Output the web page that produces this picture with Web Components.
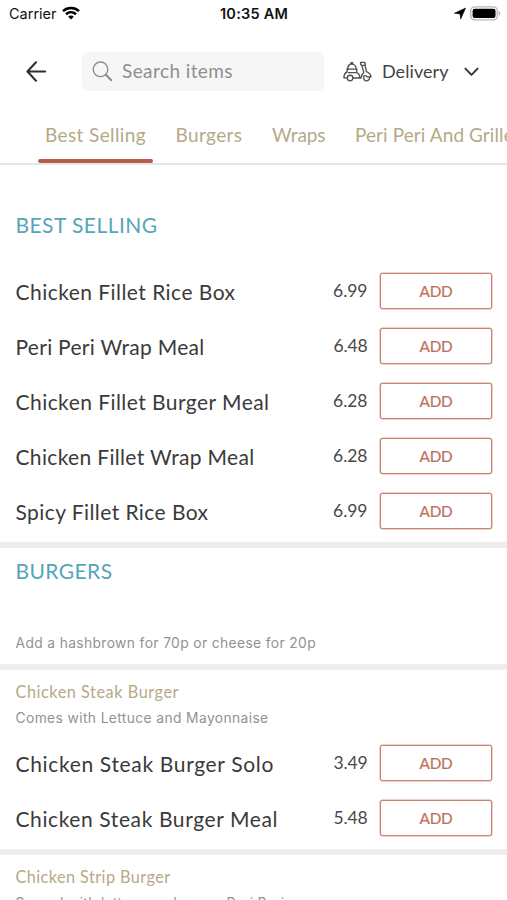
<!DOCTYPE html>
<html lang="en">
<head>
<meta charset="utf-8">
<title>Menu</title>
<style>
html, body { margin: 0; height: 100%; overflow: hidden; background: #fff; }
body { font-family: Lato, "Open Sans", sans-serif; color: #3b3b3b; }
</style>
</head>
<body>
<menu-app></menu-app>
<script>
const define = (name, html, Base = HTMLElement) => {
  const t = document.createElement('template');
  t.innerHTML = html;
  customElements.define(name, class extends Base {
    constructor() {
      super();
      this.attachShadow({ mode: 'open' }).append(t.content.cloneNode(true));
    }
  });
};

// One line of text whose tracking is set so that it spans the "w" attribute in pixels.
class TrackedText extends HTMLElement {
  constructor() {
    super();
    this.attachShadow({ mode: 'open' }).innerHTML =
      '<style>:host{display:inline-block;white-space:pre}span{display:inline-block}</style><span><slot></slot></span>';
  }
  connectedCallback() {
    const want = parseFloat(this.getAttribute('w'));
    const span = this.shadowRoot.querySelector('span');
    const n = this.textContent.length;
    if (!want || !n) return;
    span.style.letterSpacing = '0';
    const d = (want - span.getBoundingClientRect().width) / n;
    span.style.letterSpacing = d.toFixed(3) + 'px';
  }
}

define('status-bar', `
<style>
:host { display: grid; grid-template-columns: 1fr auto 1fr; align-items: center; height: 28px; padding: 0 6px 0 9px; box-sizing: border-box; font: 400 14.5px/28px Inter, sans-serif; color: #111; }
.l, .r { display: flex; align-items: center; }
.l { gap: 5px; } .r { justify-content: flex-end; gap: 4px; }
.l svg { margin-top: -2px; } .r svg { margin-top: -2px; }
.t { font-weight: 600; margin-left: -2px; }
svg { display: block; }
</style>
<div class="l"><tracked-text w="47.5">Carrier</tracked-text>
<svg width="18" height="14" viewBox="0 0 18 14" fill="none" stroke="#000" stroke-width="2.5"><path d="M1 5.1C5.5.9 12.5.9 17 5.1"/><path d="M4 8.3c3-2.7 7-2.7 10 0"/><path d="M9 13.6 6.2 10.7c1.6-1.5 4-1.5 5.6 0z" fill="#000" stroke="none"/></svg></div>
<tracked-text class="t" w="68">10:35 AM</tracked-text>
<div class="r">
<svg width="12" height="13" viewBox="0 0 12 13"><path d="M11.6 1 6.7 12.2 6 6.9.3 6.3z" fill="#000" stroke="#000" stroke-width=".5"/></svg>
<svg width="31" height="15" viewBox="0 0 31 15"><rect x=".8" y=".9" width="26.5" height="13" rx="3.8" fill="#fff" stroke="#b5b5b5" stroke-width="1.3"/><rect x="2.6" y="2.7" width="22.9" height="9.4" rx="2" fill="#000"/><path d="M28.7 5.2c2 .7 2 3.7 0 4.4z" fill="#aaa"/></svg></div>`);

define('search-field', `
<style>
:host { display: flex; align-items: center; gap: 9px; width: 242px; height: 39px; box-sizing: border-box; padding-left: 10px; border-radius: 6px; background: #f6f6f6; color: #8f8f8f; font-size: 19px; line-height: 37px; }
tracked-text, ::slotted(*) { margin-top: -2px; }
</style>
<svg width="21" height="21" viewBox="0 0 21 21" fill="none" stroke="#8d8d8d" stroke-linecap="round"><circle cx="8.5" cy="8.3" r="7.3" stroke-width="1.4"/><path d="m13.9 13.8 5.2 5.3" stroke-width="2.2"/></svg>
<slot></slot>`);

define('delivery-picker', `
<style>
:host { display: flex; align-items: center; height: 39px; font-size: 18px; line-height: 39px; color: #444; }
.s { margin-right: 10px; } .c { margin-left: 15px; }
</style>
<svg class="s" width="29" height="21" viewBox="0 0 29 21" fill="none" stroke="#505050" stroke-width="1.35" stroke-linecap="round" stroke-linejoin="round">
<path d="M4.6 8.1C4.6 5 6.4 3.1 8.8 3.1s4.4 1.9 4.4 5M8 2.9V1.7h1.7v1.2M3.6 8.1h10.3l-.4 3.4"/>
<path d="M4.6 8.2 4 10.6C2 12 .9 13.9.9 16.8h3.3M5.2 11.6h7.6M10 17h8c.2-2.4 1.2-4.2 2.8-5.6L18.9 4.6"/>
<path d="M17.6 1.3h4.3l.4 3.1h-3.4l-1.3-.9zM22.1 4.4l1.3 6.3c2.3.8 4.2 2.6 4.6 5.1h-3.8c-1-1.5-2.5-1.4-3.7-.5M13.8 11.6c2 .5 2.8 2.4 3 5.2"/>
<circle cx="7.1" cy="17" r="2.8"/><path d="M20.8 16.3c-.9 5 6.4 4.6 5.8-.4"/></svg>
<slot></slot>
<svg class="c" width="15" height="10" viewBox="0 0 15 10" fill="none" stroke="#333" stroke-width="1.9" stroke-linecap="round" stroke-linejoin="round"><path d="m1.4 1.6 6.1 6.2 6.1-6.2"/></svg>`);

define('top-bar', `
<style>
:host { display: flex; align-items: center; height: 87px; box-sizing: border-box; padding-left: 26px; }
.back { margin-right: 35px; flex: none; }
delivery-picker { margin-left: 19px; }
</style>
<svg class="back" width="21" height="21" viewBox="0 0 21 21" fill="none" stroke="#2e2e2e" stroke-width="2" stroke-linecap="round" stroke-linejoin="round"><path d="M10 1.3 1.4 10.5l8.6 9.2M1.4 10.5h17.8"/></svg>
<search-field><tracked-text w="111">Search items</tracked-text></search-field>
<delivery-picker><tracked-text w="66.5">Delivery</tracked-text></delivery-picker>`);

define('tab-item', `
<style>
:host { display: block; flex: none; box-sizing: border-box; height: 48px; padding: 0 7px; font-size: 19px; line-height: 40px; color: #b6a988; border-bottom: 4px solid transparent; }
:host([selected]) { position: relative; border: 0; }
:host([selected])::after { content: ""; position: absolute; left: 0; right: 0; bottom: 0; height: 4px; border-radius: 2px; background: #b35f4d; }
</style><slot></slot>`);

define('tab-strip', `
<style>
:host { display: flex; gap: 15.5px; height: 50px; box-sizing: border-box; padding-left: 38px; border-bottom: 2px solid #e6e6e6; overflow: hidden; }
</style><slot></slot>`);

define('section-title', `
<style>:host { display: block; font-size: 21px; line-height: 28px; color: #56a5b9; }</style><slot></slot>`);
define('group-title', `
<style>:host { display: block; font-size: 16.3px; line-height: 24px; color: #b6a988; }</style><slot></slot>`);
define('menu-note', `
<style>:host { display: block; font: 400 13.8px/20px Inter, sans-serif; color: #929292; }</style><slot></slot>`);

define('add-button', `
<style>
:host { display: block; }
button { display: flex; align-items: center; justify-content: center; width: 112px; height: 36px; box-sizing: border-box; margin: 0; padding: 0; background: #fff; border: 1px solid #c98172; box-shadow: 0 0 0 .5px #dca69a; border-radius: 2.5px; font: 400 15.3px/20px Lato, sans-serif; color: #bd705e; -webkit-text-stroke: .2px; }
</style><button><tracked-text w="33">ADD</tracked-text></button>`);

define('menu-item', `
<style>
:host { display: grid; grid-template-columns: 1fr auto 113px; align-items: center; height: 55px; font-size: 21px; line-height: 28px; color: #3a3a3a; }
.n { padding-top: 2px; }
.p { font-size: 17.5px; color: #484848; margin: 1px 12.5px 0 0; }
</style><div class="n"><slot></slot></div><div class="p"><slot name="price"></slot></div><add-button></add-button>`);

define('menu-section', `
<style>
:host { display: block; padding: var(--top, 0) 14px var(--bottom, 0) 15.5px; }
:host([divided]) { border-bottom: 6px solid #ededed; }
</style><slot></slot>`);

define('menu-app', `
<style>
:host { display: flex; flex-direction: column; width: 507px; height: 900px; overflow: hidden; }
:host > * { flex: none; }
.first { --top: 46px; --bottom: 4px; } .first section-title { margin-bottom: 24px; }
.burgers { --top: 9px; --bottom: 11px; } .burgers section-title { margin-bottom: 48px; }
.steak { --top: 10px; --bottom: 4px; } .steak menu-note { margin: 4px 0 7px; }
.strip { --top: 10px; } .strip menu-note { margin-top: 4px; }
</style>
<status-bar></status-bar>
<top-bar></top-bar>
<tab-strip>
<tab-item selected><tracked-text w="101">Best Selling</tracked-text></tab-item>
<tab-item><tracked-text w="67">Burgers</tracked-text></tab-item>
<tab-item><tracked-text w="53.5">Wraps</tracked-text></tab-item>
<tab-item><tracked-text w="169.5">Peri Peri And Grilled</tracked-text></tab-item>
</tab-strip>
<menu-section class="first" divided>
<section-title><tracked-text w="142">BEST SELLING</tracked-text></section-title>
<menu-item><tracked-text w="220">Chicken Fillet Rice Box</tracked-text><tracked-text slot="price" w="34.5">6.99</tracked-text></menu-item>
<menu-item><tracked-text w="189">Peri Peri Wrap Meal</tracked-text><tracked-text slot="price" w="34">6.48</tracked-text></menu-item>
<menu-item><tracked-text w="254">Chicken Fillet Burger Meal</tracked-text><tracked-text slot="price" w="34.5">6.28</tracked-text></menu-item>
<menu-item><tracked-text w="239">Chicken Fillet Wrap Meal</tracked-text><tracked-text slot="price" w="34.5">6.28</tracked-text></menu-item>
<menu-item><tracked-text w="193">Spicy Fillet Rice Box</tracked-text><tracked-text slot="price" w="34.5">6.99</tracked-text></menu-item>
</menu-section>
<menu-section class="burgers" divided>
<section-title><tracked-text w="97">BURGERS</tracked-text></section-title>
<menu-note><tracked-text w="300.5">Add a hashbrown for 70p or cheese for 20p</tracked-text></menu-note>
</menu-section>
<menu-section class="steak" divided>
<group-title><tracked-text w="163.5">Chicken Steak Burger</tracked-text></group-title>
<menu-note><tracked-text w="253">Comes with Lettuce and Mayonnaise</tracked-text></menu-note>
<menu-item><tracked-text w="258.5">Chicken Steak Burger Solo</tracked-text><tracked-text slot="price" w="34">3.49</tracked-text></menu-item>
<menu-item><tracked-text w="262.5">Chicken Steak Burger Meal</tracked-text><tracked-text slot="price" w="34">5.48</tracked-text></menu-item>
</menu-section>
<menu-section class="strip">
<group-title><tracked-text w="155">Chicken Strip Burger</tracked-text></group-title>
<menu-note><tracked-text w="269">Served with lettuce and mayo, Peri Peri</tracked-text></menu-note>
</menu-section>`);

customElements.define('tracked-text', TrackedText);
</script>
</body>
</html>
